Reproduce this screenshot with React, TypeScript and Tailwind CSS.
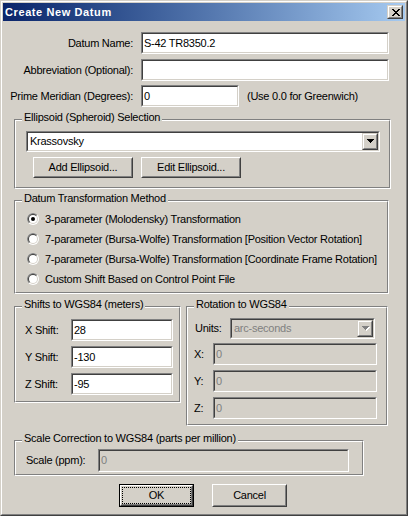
import React from "react";

const sunkenOuter = "border border-t-[#808080] border-l-[#808080] border-r-white border-b-white";
const sunkenInner = "border border-t-[#404040] border-l-[#404040] border-r-[#d4d0c8] border-b-[#d4d0c8]";

function Field({ className, value = "", disabled = false }: { className: string; value?: string; disabled?: boolean }) {
  return (
    <div className={`${className} ${sunkenOuter}`}>
      <div
        className={`h-full ${sunkenInner} ${disabled ? "bg-[#d4d0c8] text-[#808080]" : "bg-white text-black"} flex items-center pl-[1px] whitespace-nowrap overflow-hidden`}
      >
        {value}
      </div>
    </div>
  );
}

function Arrow({ disabled = false }: { disabled?: boolean }) {
  return (
    <svg width="8" height="5" viewBox="0 0 8 5" shapeRendering="crispEdges">
      {disabled && (
        <g fill="#ffffff">
          <rect x="1" y="1" width="7" height="1" />
          <rect x="2" y="2" width="5" height="1" />
          <rect x="3" y="3" width="3" height="1" />
          <rect x="4" y="4" width="1" height="1" />
        </g>
      )}
      <g fill={disabled ? "#808080" : "#000000"}>
        <rect x="0" y="0" width="7" height="1" />
        <rect x="1" y="1" width="5" height="1" />
        <rect x="2" y="2" width="3" height="1" />
        <rect x="3" y="3" width="1" height="1" />
      </g>
    </svg>
  );
}

function Combo({ className, value, disabled = false }: { className: string; value: string; disabled?: boolean }) {
  return (
    <div className={`${className} ${sunkenOuter}`}>
      <div className={`h-full ${sunkenInner} ${disabled ? "bg-[#d4d0c8] text-[#808080]" : "bg-white text-black"} flex`}>
        <div className="flex-1 flex items-center pl-[2px] whitespace-nowrap">{value}</div>
        <div className="w-[16px] h-full border border-t-[#d4d0c8] border-l-[#d4d0c8] border-r-[#404040] border-b-[#404040] bg-[#d4d0c8]">
          <div className="h-full border border-t-white border-l-white border-r-[#808080] border-b-[#808080] flex items-center justify-center pl-[1px]">
            <Arrow disabled={disabled} />
          </div>
        </div>
      </div>
    </div>
  );
}

function Button({ className, children, isDefault = false }: { className: string; children: React.ReactNode; isDefault?: boolean }) {
  if (isDefault) {
    return (
      <div className={`${className} border border-black`}>
        <div className="h-full border border-t-white border-l-white border-r-[#404040] border-b-[#404040]">
          <div className="h-full border border-t-[#d4d0c8] border-l-[#d4d0c8] border-r-[#808080] border-b-[#808080]">
            <div className="h-full border border-dotted border-black flex items-center justify-center">{children}</div>
          </div>
        </div>
      </div>
    );
  }
  return (
    <div className={`${className} border border-t-white border-l-white border-r-[#404040] border-b-[#404040]`}>
      <div className="h-full border border-t-[#d4d0c8] border-l-[#d4d0c8] border-r-[#808080] border-b-[#808080] flex items-center justify-center">
        {children}
      </div>
    </div>
  );
}

function Group({ className, title, children }: { className: string; title: string; children: React.ReactNode }) {
  return (
    <div className={`relative ${className} border border-t-[#808080] border-l-[#808080] border-r-white border-b-white`}>
      <div className="h-full border border-t-white border-l-white border-r-[#808080] border-b-[#808080]">{children}</div>
      <span className="absolute left-[7px] top-[-9px] px-[2px] bg-[#d4d0c8] leading-[13px] whitespace-nowrap">{title}</span>
    </div>
  );
}

function Radio({ checked = false, label }: { checked?: boolean; label: string }) {
  return (
    <div className="h-[20px] flex items-center">
      <svg width="12" height="12" viewBox="0 0 12 12" className="shrink-0">
        <circle cx="6" cy="6" r="6" fill="#ffffff" />
        <path d="M1.757,10.243 A6,6 0 0 1 10.243,1.757 Z" fill="#808080" />
        <circle cx="6" cy="6" r="5" fill="#d4d0c8" />
        <path d="M2.464,9.536 A5,5 0 0 1 9.536,2.464 Z" fill="#404040" />
        <circle cx="6" cy="6" r="4" fill="#ffffff" />
        {checked && <circle cx="6" cy="6" r="2" fill="#000000" />}
      </svg>
      <span className="ml-[6px] whitespace-nowrap">{label}</span>
    </div>
  );
}

function CloseGlyph() {
  const rows = [
    [0, 1, 6, 7],
    [1, 2, 5, 6],
    [2, 3, 4, 5],
    [3, 4],
    [2, 3, 4, 5],
    [1, 2, 5, 6],
    [0, 1, 6, 7],
  ];
  return (
    <svg width="8" height="7" viewBox="0 0 8 7" shapeRendering="crispEdges">
      {rows.map((r, y) => r.map((x) => <rect key={`${x}-${y}`} x={x} y={y} width="1" height="1" fill="#000" />))}
    </svg>
  );
}

export default function App() {
  return (
    <div className="w-[408px] h-[516px] border border-t-[#d4d0c8] border-l-[#d4d0c8] border-r-[#404040] border-b-[#404040] bg-[#d4d0c8] font-['Liberation_Sans',Arial,sans-serif] text-[11px] tracking-[-0.25px] text-black leading-[13px] select-none">
      <div className="h-full border border-t-white border-l-white border-r-[#808080] border-b-[#808080] p-[1px] flex flex-col">
        {/* Title bar */}
        <div className="h-[18px] shrink-0 bg-linear-to-r from-[#0a246a] to-[#a6caf0] flex items-center pl-[2px] pr-[2px]">
          <span className="text-white font-bold text-[11px] tracking-[0.6px] flex-1">Create New Datum</span>
          <div className="w-[16px] h-[14px] border border-t-[#d4d0c8] border-l-[#d4d0c8] border-r-[#404040] border-b-[#404040] bg-[#d4d0c8]">
            <div className="h-full border border-t-white border-l-white border-r-[#808080] border-b-[#808080] flex items-start justify-start pl-[3px] pt-[2px]">
              <CloseGlyph />
            </div>
          </div>
        </div>

        {/* Content */}
        <div className="flex flex-col">
          <div className="flex items-center mt-[11px]">
            <span className="w-[130px] text-right">Datum Name:</span>
            <Field className="ml-[8px] w-[248px] h-[22px]" value="S-42 TR8350.2" />
          </div>
          <div className="flex items-center mt-[5px]">
            <span className="w-[130px] text-right">Abbreviation (Optional):</span>
            <Field className="ml-[8px] w-[248px] h-[22px]" />
          </div>
          <div className="flex items-center mt-[4px]">
            <span className="w-[130px] text-right whitespace-nowrap">Prime Meridian (Degrees):</span>
            <Field className="ml-[8px] w-[98px] h-[22px]" value="0" />
            <span className="ml-[8px]">(Use 0.0 for Greenwich)</span>
          </div>

          <Group className="ml-[11px] mt-[12px] w-[377px] h-[70px]" title="Ellipsoid (Spheroid) Selection">
            <div className="flex flex-col pl-[10px] pt-[10px]">
              <Combo className="w-[354px] h-[21px]" value="Krassovsky" />
              <div className="flex mt-[5px] ml-[7px]">
                <Button className="w-[100px] h-[21px]">Add Ellipsoid...</Button>
                <Button className="ml-[8px] w-[100px] h-[21px]">Edit Ellipsoid...</Button>
              </div>
            </div>
          </Group>

          <Group className="ml-[11px] mt-[11px] w-[375px] h-[94px]" title="Datum Transformation Method">
            <div className="flex flex-col pl-[11px] pt-[7px]">
              <Radio checked label="3-parameter (Molodensky) Transformation" />
              <Radio label="7-parameter (Bursa-Wolfe) Transformation [Position Vector Rotation]" />
              <Radio label="7-parameter (Bursa-Wolfe) Transformation [Coordinate Frame Rotation]" />
              <Radio label="Custom Shift Based on Control Point File" />
            </div>
          </Group>

          <div className="flex items-start ml-[11px] mt-[12px]">
            <Group className="w-[167px] h-[97px]" title="Shifts to WGS84 (meters)">
              <div className="flex flex-col pl-[9px] pt-[11px] gap-[5px]">
                <div className="flex items-center">
                  <span className="w-[46px]">X Shift:</span>
                  <Field className="w-[102px] h-[22px]" value="28" />
                </div>
                <div className="flex items-center">
                  <span className="w-[46px]">Y Shift:</span>
                  <Field className="w-[102px] h-[22px]" value="-130" />
                </div>
                <div className="flex items-center">
                  <span className="w-[46px]">Z Shift:</span>
                  <Field className="w-[102px] h-[22px]" value="-95" />
                </div>
              </div>
            </Group>
            <Group className="ml-[5px] w-[202px] h-[120px]" title="Rotation to WGS84">
              <div className="flex flex-col pl-[6px] pt-[10px]">
                <div className="flex items-center">
                  <span className="w-[36px] pl-[1px]">Units:</span>
                  <Combo className="w-[145px] h-[21px]" value="arc-seconds" disabled />
                </div>
                <div className="flex flex-col gap-[5px] mt-[4px]">
                  <div className="flex items-center">
                    <span className="w-[19px]">X:</span>
                    <Field className="w-[164px] h-[22px]" value="0" disabled />
                  </div>
                  <div className="flex items-center">
                    <span className="w-[19px]">Y:</span>
                    <Field className="w-[164px] h-[22px]" value="0" disabled />
                  </div>
                  <div className="flex items-center">
                    <span className="w-[19px]">Z:</span>
                    <Field className="w-[164px] h-[22px]" value="0" disabled />
                  </div>
                </div>
              </div>
            </Group>
          </div>

          <Group className="ml-[11px] mt-[14px] w-[350px] h-[36px]" title="Scale Correction to WGS84 (parts per million)">
            <div className="flex items-center pl-[10px] pt-[7px]">
              <span className="w-[72px]">Scale (ppm):</span>
              <Field className="w-[251px] h-[23px]" value="0" disabled />
            </div>
          </Group>

          <div className="flex mt-[8px] ml-[116px]">
            <Button isDefault className="w-[75px] h-[23px]">OK</Button>
            <Button className="ml-[18px] w-[75px] h-[23px]">Cancel</Button>
          </div>
        </div>
      </div>
    </div>
  );
}
